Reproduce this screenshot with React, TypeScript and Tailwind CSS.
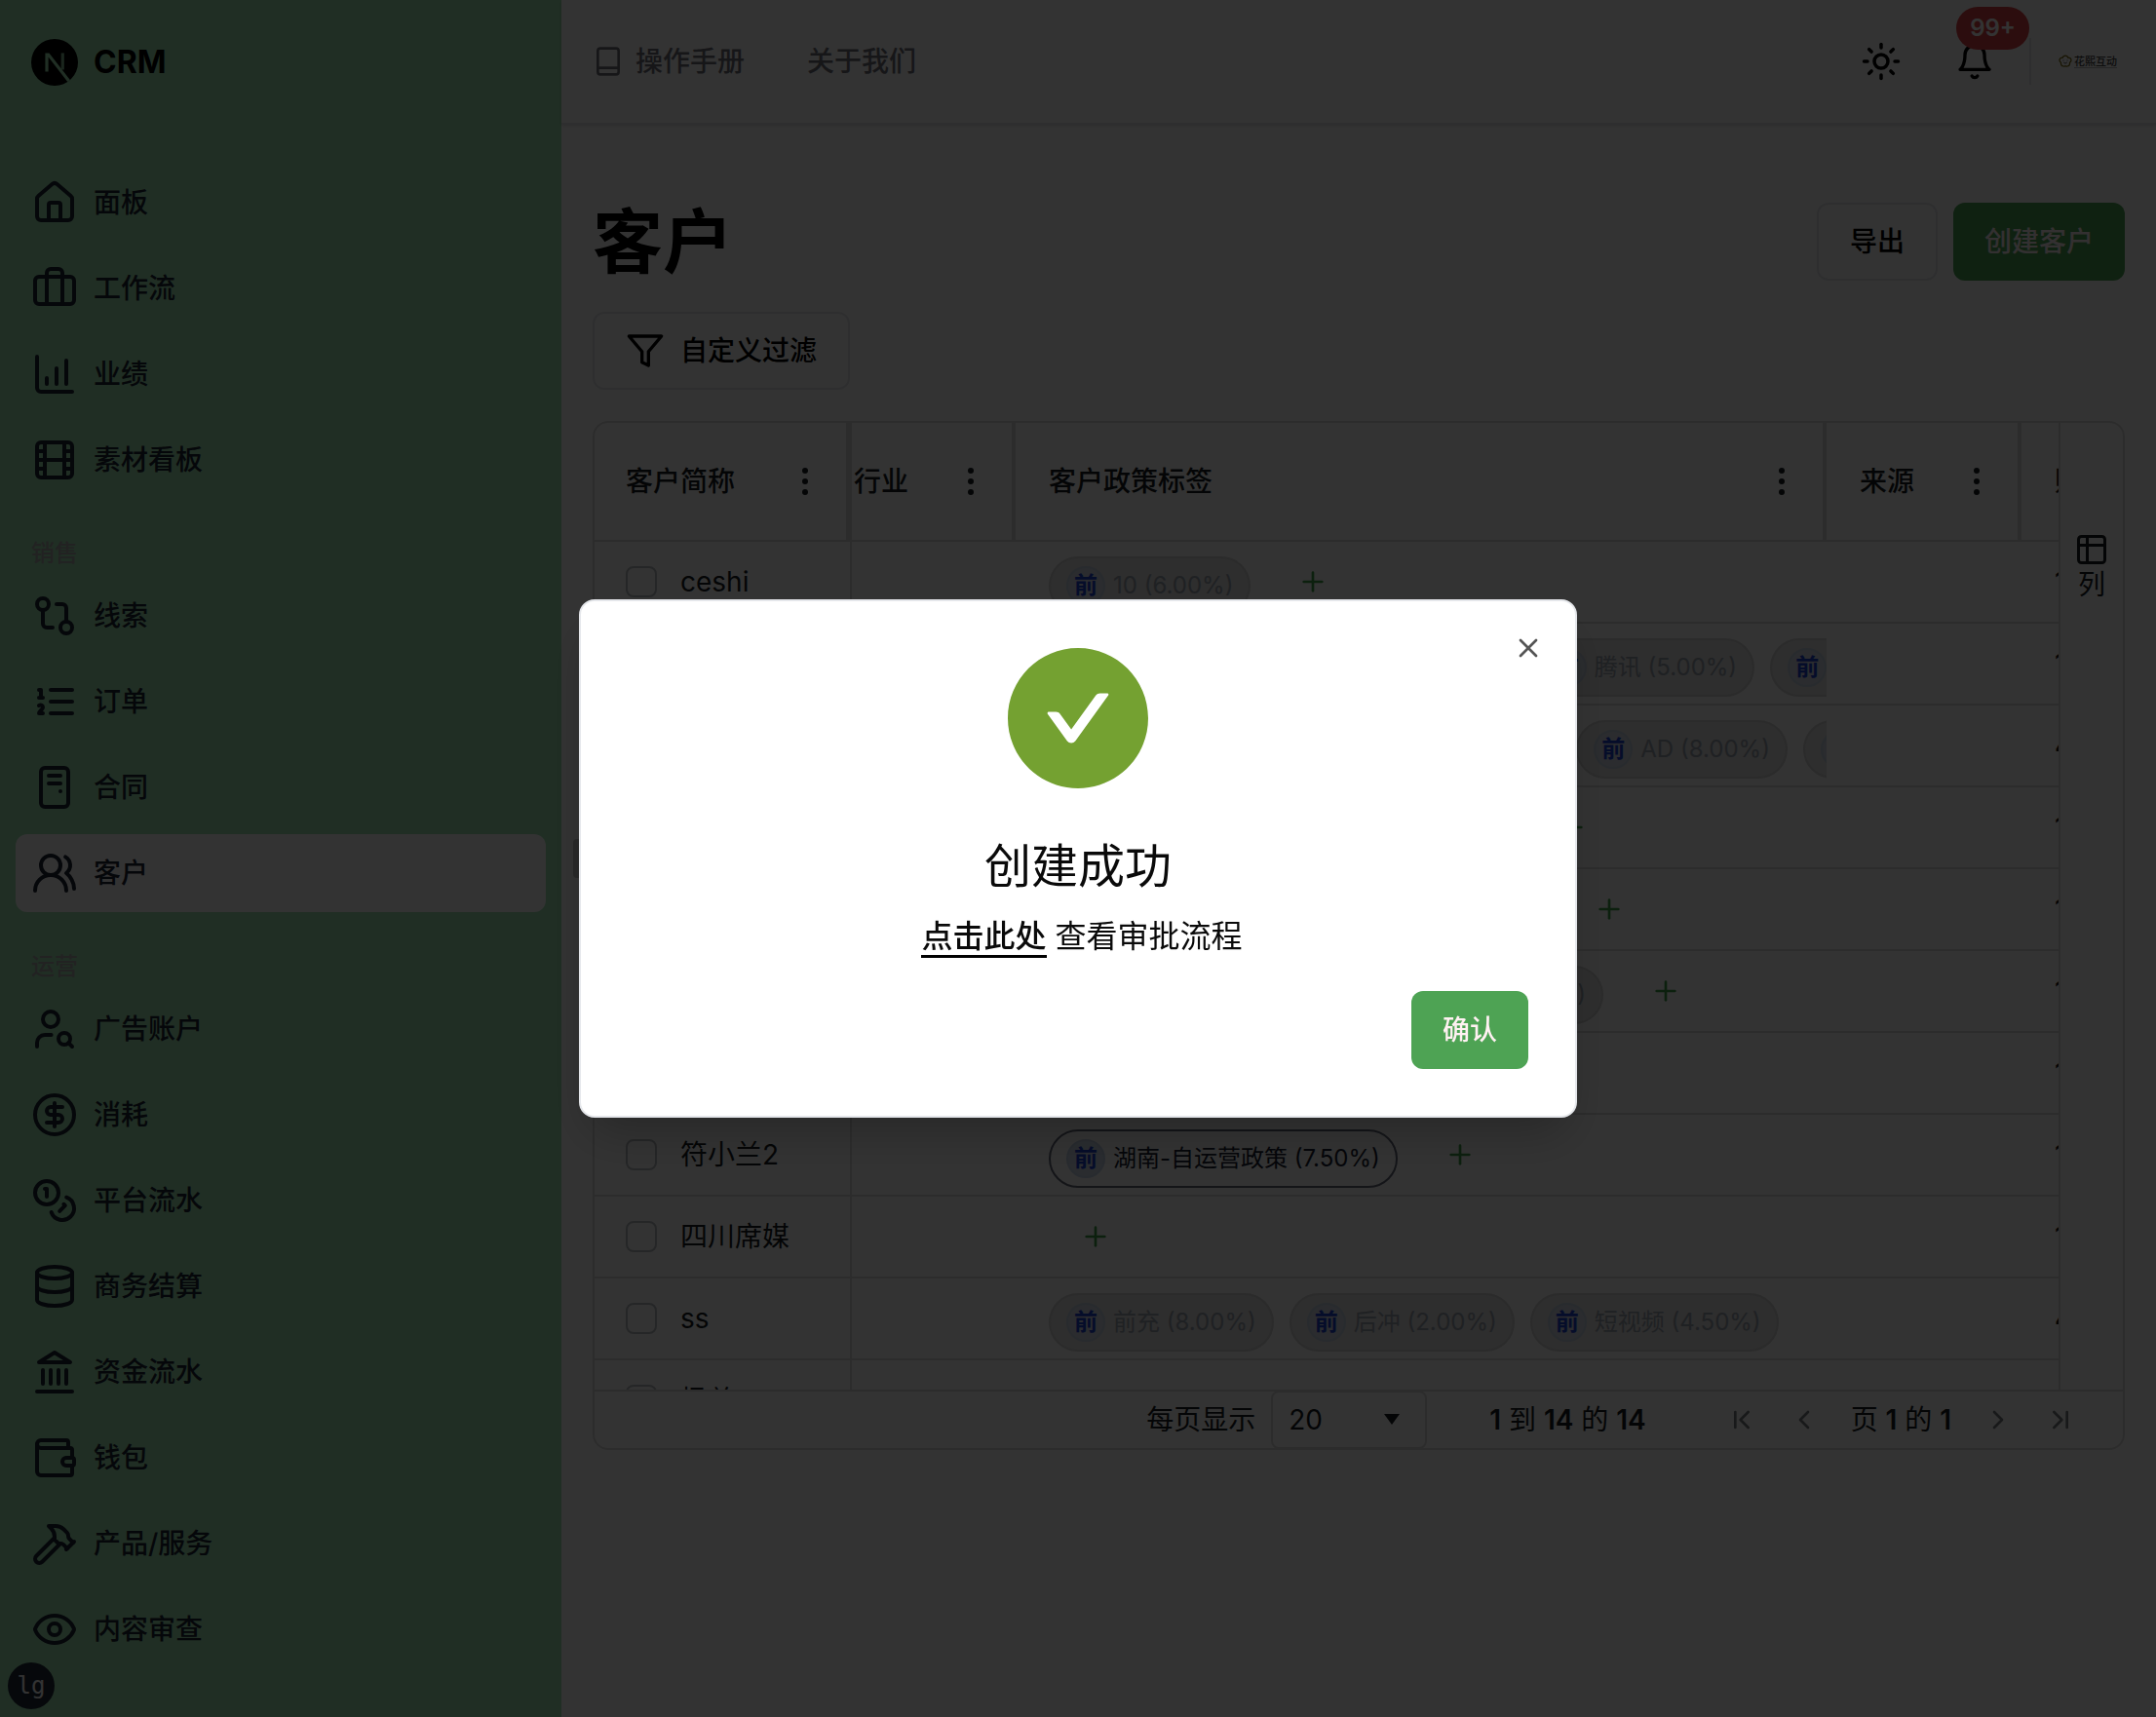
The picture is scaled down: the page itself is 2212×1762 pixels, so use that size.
import type { ComponentType, ReactNode, SVGProps } from 'react'
import {
  Briefcase,
  ChartColumnIncreasing,
  ChevronFirst,
  ChevronLast,
  ChevronLeft,
  ChevronRight,
  CircleDollarSign,
  Database,
  Eye,
  Film,
  GitCompare,
  Hammer,
  House,
  PcCase,
  Plus,
  Sun,
  UserSearch,
  UsersRound,
  Wallet,
  X,
} from 'lucide-react'
import { clsx } from 'clsx'

type IconType = ComponentType<{ className?: string }>

function StrokeIcon({ children, ...props }: SVGProps<SVGSVGElement> & { children: ReactNode }) {
  return (
    <svg
      viewBox="0 0 24 24"
      fill="none"
      stroke="currentColor"
      strokeWidth="2"
      strokeLinecap="round"
      strokeLinejoin="round"
      aria-hidden="true"
      {...props}
    >
      {children}
    </svg>
  )
}

const OrderIcon: IconType = ({ className }) => (
  <StrokeIcon className={className}>
    <path d="M10 6h11M10 12h11M10 18h11M4 6h1v4M4 10h2M6 18H4c0-1 2-2 2-3s-1-1.5-2-1" />
  </StrokeIcon>
)

const CoinsIcon: IconType = ({ className }) => (
  <StrokeIcon className={className}>
    <circle cx="8" cy="8" r="6" />
    <path d="M18.09 10.37A6 6 0 1 1 10.34 18M7 6h1v4M16.71 13.88l.7.71-2.82 2.82" />
  </StrokeIcon>
)

const BankIcon: IconType = ({ className }) => (
  <StrokeIcon className={className}>
    <path d="M3 22h18M6 18v-7M10 18v-7M14 18v-7M18 18v-7M12 2l8 5H4z" />
  </StrokeIcon>
)

const BookIcon: IconType = ({ className }) => (
  <StrokeIcon className={className}>
    <rect x="4" y="2" width="16" height="20" rx="2" />
    <path d="M4 17h16" />
  </StrokeIcon>
)

const BellIcon: IconType = ({ className }) => (
  <StrokeIcon className={className}>
    <path d="M6 8a6 6 0 0 1 12 0c0 7 3 9 3 9H3s3-2 3-9" />
    <path d="M10.3 21a1.94 1.94 0 0 0 3.4 0" />
  </StrokeIcon>
)

const FilterIcon: IconType = ({ className }) => (
  <StrokeIcon className={className}>
    <polygon points="22 3 2 3 10 12.46 10 19 14 21 14 12.46 22 3" />
  </StrokeIcon>
)

const ColumnsIcon: IconType = ({ className }) => (
  <StrokeIcon className={className}>
    <rect x="3" y="3" width="18" height="18" rx="2" />
    <path d="M3 9h18M9 3v18" />
  </StrokeIcon>
)

const DotsIcon: IconType = ({ className }) => (
  <svg viewBox="0 0 32 32" fill="currentColor" className={className} aria-hidden="true">
    <circle cx="16" cy="5" r="3" />
    <circle cx="16" cy="16" r="3" />
    <circle cx="16" cy="27" r="3" />
  </svg>
)

interface NavItem {
  label: string
  icon: IconType
  active?: boolean
}

const navGroups: { title?: string; items: NavItem[] }[] = [
  {
    items: [
      { label: '面板', icon: House },
      { label: '工作流', icon: Briefcase },
      { label: '业绩', icon: ChartColumnIncreasing },
      { label: '素材看板', icon: Film },
    ],
  },
  {
    title: '销售',
    items: [
      { label: '线索', icon: GitCompare },
      { label: '订单', icon: OrderIcon },
      { label: '合同', icon: PcCase },
      { label: '客户', icon: UsersRound, active: true },
    ],
  },
  {
    title: '运营',
    items: [
      { label: '广告账户', icon: UserSearch },
      { label: '消耗', icon: CircleDollarSign },
      { label: '平台流水', icon: CoinsIcon },
      { label: '商务结算', icon: Database },
      { label: '资金流水', icon: BankIcon },
      { label: '钱包', icon: Wallet },
      { label: '产品/服务', icon: Hammer },
      { label: '内容审查', icon: Eye },
    ],
  },
]

interface Policy {
  text: string
  enabled?: boolean
}

interface Customer {
  name: string
  policies: Policy[]
  accounts: number
}

const customers: Customer[] = [
  { name: 'ceshi', policies: [{ text: '10 (6.00%)' }], accounts: 1 },
  {
    name: '测试客户',
    policies: [{ text: '前充 (8.00%)' }, { text: '后冲 (2.00%)' }, { text: '腾讯 (5.00%)' }, { text: '快手 (3.00%)' }],
    accounts: 1,
  },
  {
    name: '星河传媒',
    policies: [{ text: '短视频 (4.50%)' }, { text: '信息流 (6.00%)' }, { text: 'AD (8.00%)' }, { text: '千川 (2.00%)' }],
    accounts: 4,
  },
  { name: '云帆科技', policies: [{ text: '前充 (1.00%)' }, { text: '后冲 (2.00%)' }], accounts: 1 },
  { name: '蓝海', policies: [{ text: '巨量引擎 (6.00%)' }, { text: 'AD (8.00%)' }], accounts: 1 },
  { name: '长沙互动', policies: [{ text: '巨量引擎 (7.50%)' }, { text: '磁力金牛 (5.00%)' }], accounts: 1 },
  { name: '符小兰', policies: [{ text: '前充 (8.00%)' }], accounts: 1 },
  { name: '符小兰2', policies: [{ text: '湖南-自运营政策 (7.50%)', enabled: true }], accounts: 1 },
  { name: '四川席媒', policies: [], accounts: 1 },
  {
    name: 'ss',
    policies: [{ text: '前充 (8.00%)' }, { text: '后冲 (2.00%)' }, { text: '短视频 (4.50%)' }],
    accounts: 4,
  },
  { name: '杨总', policies: [], accounts: 1 },
]

function NextLogo() {
  return (
    <svg viewBox="0 0 180 180" className="size-12" aria-hidden="true">
      <circle cx="90" cy="90" r="90" fill="#000" />
      <path
        d="M149.508 157.52 69.142 54H54v71.97h12.114V69.384l73.885 95.461a90.304 90.304 0 0 0 9.509-7.325z"
        fill="#a0e6b4"
      />
      <rect x="115" y="54" width="12" height="64" fill="#a0e6b4" opacity="0.8" />
    </svg>
  )
}

function Sidebar() {
  return (
    <aside className="w-144 shrink-0 bg-[#a0e6b4] px-4 pt-10">
      <a href="#home" className="flex items-center gap-4 px-4 text-black">
        <NextLogo />
        <span className="text-[32px] leading-12 font-bold">CRM</span>
      </a>
      <nav className="mt-20 flex flex-col gap-10">
        {navGroups.map((group, index) => (
          <div key={index}>
            {group.title && (
              <h2 className="mb-2 px-4 text-2xl font-medium text-[#a8a8a8]">{group.title}</h2>
            )}
            <ul className="flex flex-col gap-2">
              {group.items.map(({ label, icon: Icon, active }) => (
                <li key={label}>
                  <a
                    href={`#${label}`}
                    className={clsx(
                      'flex h-20 items-center gap-4 rounded-xl px-4 text-[28px] font-medium text-[#1c2333]',
                      active && 'bg-white'
                    )}
                  >
                    <Icon className="size-12" />
                    {label}
                  </a>
                </li>
              ))}
            </ul>
          </div>
        ))}
      </nav>
    </aside>
  )
}

function BrandMark() {
  return (
    <a href="#profile" className="ml-7 mr-2 flex items-center gap-0.5">
      <svg viewBox="0 0 28 28" className="size-3.5" fill="none" aria-hidden="true">
        <path
          d="M14 2c3 0 5 2 5.5 4.5C23 6 26 8.5 26 11.5c0 2.5-1.5 4-3 5 .5 4-1.5 7-5 7.5-2 .5-3-.5-4-.5s-2 1-4 .5c-3.5-.5-5.5-3.5-5-7.5-1.5-1-3-2.5-3-5C2 8.5 5 6 8.5 6.5 9 4 11 2 14 2z"
          stroke="#7a6a10"
          strokeWidth="2.5"
        />
        <path d="M9 12h2M17 12h2M10.5 16c1.5 2.5 5.5 2.5 7 0" stroke="#555" strokeWidth="2" />
      </svg>
      <span className="border-b border-[#bbb] text-[11px] leading-3 font-medium text-[#444]">花熙互动</span>
    </a>
  )
}

function Header() {
  return (
    <header className="flex h-32 items-center border-b-2 border-gray-200 px-8 shadow-sm">
      <nav className="flex items-center gap-16 text-[28px] font-medium text-[#71717a]">
        <a href="#manual" className="flex items-center gap-3">
          <BookIcon className="size-8" />
          操作手册
        </a>
        <a href="#about">关于我们</a>
      </nav>
      <div className="ml-auto flex items-center">
        <button aria-label="切换主题" className="mr-4 flex size-20 items-center justify-center text-black">
          <Sun className="size-[42px]" />
        </button>
        <button aria-label="通知" className="relative mr-4 flex size-20 items-center justify-center text-black">
          <BellIcon className="size-10" />
          <span className="absolute -top-4 -right-4 flex h-11 items-center rounded-full bg-[#dc4446] px-3.5 text-2xl font-semibold text-white">
            99+
          </span>
        </button>
        <span className="h-12 w-0.5 bg-gray-200" />
        <BrandMark />
      </div>
    </header>
  )
}

function PolicyTag({ text, enabled }: Policy) {
  return (
    <span
      className={clsx(
        'mr-4 flex h-15 shrink-0 items-center gap-2 rounded-full border-2 px-4 text-2xl',
        enabled ? 'border-[#64687a] text-[#181d2f]' : 'border-[#d4d4d4] bg-[#e3e3e3] text-[#9ca3af]'
      )}
    >
      <span
        className={clsx(
          'flex size-10 items-center justify-center rounded-full border-2 font-bold text-[#1d40d0]',
          enabled ? 'border-[#c6d4ea] bg-[#d0dcec]' : 'border-[#c8d4e6] bg-[#d4dde8]'
        )}
      >
        前
      </span>
      {text}
    </span>
  )
}

function HeadCell({ children, className }: { children: ReactNode; className?: string }) {
  return (
    <th scope="col" className={clsx('h-[122px] border-b-2 border-[#dcdcdc] p-0 text-left font-medium', className)}>
      <div className="flex items-center justify-between whitespace-nowrap">
        {children}
        <button aria-label="列菜单">
          <DotsIcon className="size-8" />
        </button>
      </div>
    </th>
  )
}

function CustomerTable() {
  const cell = 'h-21 overflow-hidden border-b-2 border-[#dcdcdc] p-0 whitespace-nowrap'

  return (
    <table className="w-full table-fixed border-separate border-spacing-0">
      <colgroup>
        <col className="w-66" />
        <col className="w-42" />
        <col className="w-208" />
        <col className="w-50" />
        <col />
      </colgroup>
      <thead>
        <tr>
          <HeadCell className="border-r-6 pr-[26px] pl-8">客户简称</HeadCell>
          <HeadCell className="border-r-4 pr-[26px] pl-0.5">行业</HeadCell>
          <HeadCell className="border-r-4 pr-[26px] pl-[34px]">客户政策标签</HeadCell>
          <HeadCell className="border-r-4 pr-[26px] pl-[34px]">来源</HeadCell>
          <th
            scope="col"
            className="overflow-hidden border-b-2 border-[#dcdcdc] p-0 pl-[34px] text-left font-medium whitespace-nowrap"
          >
            账户数
          </th>
        </tr>
      </thead>
      <tbody>
        {customers.map((customer) => (
          <tr key={customer.name}>
            <td className={clsx(cell, 'border-r-2')}>
              <label className="flex items-center gap-6 pl-8">
                <input
                  type="checkbox"
                  className="size-8 shrink-0 appearance-none rounded-lg border-2 border-[#b8bcc0]"
                />
                {customer.name}
              </label>
            </td>
            <td className={cell} />
            <td className={cell}>
              <div className="flex items-center pl-[34px]">
                <div className="flex pt-2">
                  {customer.policies.map((policy) => (
                    <PolicyTag key={policy.text} {...policy} />
                  ))}
                </div>
                <button aria-label="添加政策" className="flex w-24 shrink-0 justify-center text-[#3f9e48]">
                  <Plus className="size-8" />
                </button>
              </div>
            </td>
            <td className={cell} />
            <td className={clsx(cell, 'pl-[34px] font-medium')}>{customer.accounts}</td>
          </tr>
        ))}
      </tbody>
    </table>
  )
}

function Pagination() {
  return (
    <footer className="flex h-15 items-center justify-end border-t-2 border-[#dcdcdc] pr-12">
      <label htmlFor="page-size" className="mr-4">
        每页显示
      </label>
      <div className="relative mr-16">
        <select
          id="page-size"
          defaultValue="20"
          className="h-15 w-40 appearance-none rounded-lg border-2 border-[#dcdcdc] bg-white pl-4"
        >
          <option>20</option>
          <option>50</option>
          <option>100</option>
        </select>
        <svg
          viewBox="0 0 16 11"
          fill="currentColor"
          className="pointer-events-none absolute top-6 right-7 h-[11px] w-4"
          aria-hidden="true"
        >
          <path d="M0 0h16L8 11z" />
        </svg>
      </div>
      <p className="mr-[82px]">
        <b className="font-semibold">1</b> 到 <b className="font-semibold">14</b> 的 <b className="font-semibold">14</b>
      </p>
      <div className="flex items-center gap-8">
        <button aria-label="第一页" disabled className="text-[#7b7e80]">
          <ChevronFirst className="size-8" />
        </button>
        <button aria-label="上一页" disabled className="text-[#7b7e80]">
          <ChevronLeft className="size-8" />
        </button>
        <p>
          页 <b className="font-semibold">1</b> 的 <b className="font-semibold">1</b>
        </p>
        <button aria-label="下一页" disabled className="text-[#7b7e80]">
          <ChevronRight className="size-8" />
        </button>
        <button aria-label="最后一页" disabled className="text-[#7b7e80]">
          <ChevronLast className="size-8" />
        </button>
      </div>
    </footer>
  )
}

function SuccessDialog() {
  return (
    <div className="fixed inset-0 z-50 flex items-center justify-center bg-black/80">
      <div
        role="dialog"
        aria-modal="true"
        aria-labelledby="dialog-title"
        className="relative flex w-full max-w-5xl flex-col items-center rounded-2xl border-2 border-gray-200 bg-white p-12 shadow-2xl"
      >
        <button aria-label="关闭" className="absolute top-8 right-8 text-[#555]">
          <X className="size-8" />
        </button>
        <svg viewBox="64 64 896 896" className="size-36" aria-hidden="true">
          <path
            fill="#74a131"
            d="M512 64C264.6 64 64 264.6 64 512s200.6 448 448 448 448-200.6 448-448S759.4 64 512 64zm193.5 301.7l-210.6 292a31.8 31.8 0 0 1-51.7 0L318.5 484.9c-3.8-5.3 0-12.7 6.5-12.7h46.9c10.2 0 19.9 4.9 25.9 13.3l71.2 98.8 157.2-218c6-8.3 15.6-13.3 25.9-13.3H699c6.5 0 10.3 7.4 6.5 12.7z"
          />
        </svg>
        <h2 id="dialog-title" className="mt-12 text-5xl leading-16">
          创建成功
        </h2>
        <p className="mt-4 pl-2 text-[32px] leading-12">
          <a href="#approval" className="border-b-3 border-black font-medium">
            点击此处
          </a>{' '}
          查看审批流程
        </p>
        <button className="mt-8 h-20 self-end rounded-xl bg-[#4ea354] px-8 font-medium text-[#fff1f2]">确认</button>
      </div>
    </div>
  )
}

export default function App() {
  return (
    <div className="flex min-h-screen bg-white font-['Inter','Noto_Sans_CJK_SC',sans-serif] text-[28px] leading-10 text-[#0a0a0a]">
      <Sidebar />
      <div className="relative min-w-0 flex-1">
        {/* resize handle, centred on the panel edge */}
        <span className="absolute top-1/2 left-3 h-10 w-6 -translate-y-1/2 rounded bg-[#c9c9c9]" />
        <Header />
        <main className="px-8 pt-20">
          <div className="flex items-center justify-between">
            <h1 className="text-7xl font-bold text-black">客户</h1>
            <div className="flex gap-4 font-medium">
              <button className="h-20 rounded-xl border-2 border-gray-200 px-8 text-black">导出</button>
              <button className="h-20 rounded-xl bg-[#4da354] px-8 text-[#fff1f2]">创建客户</button>
            </div>
          </div>
          <button className="mt-8 flex h-20 items-center gap-4 rounded-xl border-2 border-gray-200 px-8 font-medium text-black">
            <FilterIcon className="size-10" />
            自定义过滤
          </button>
          <section className="mt-8 overflow-hidden rounded-2xl border-2 border-[#dcdcdc] text-[#181d1f]">
            <div className="flex h-[992px]">
              <div className="min-w-0 flex-1 overflow-hidden">
                <CustomerTable />
              </div>
              <div className="w-[66px] shrink-0 border-l-2 border-[#dcdcdc] pt-28">
                <button className="flex w-full flex-col items-center leading-9">
                  <ColumnsIcon className="size-9" />
                  列
                </button>
              </div>
            </div>
            <Pagination />
          </section>
        </main>
      </div>
      <span className="fixed bottom-2 left-2 z-40 flex size-12 items-center justify-center rounded-full bg-[#1f2937] font-['DejaVu_Sans_Mono',monospace] text-2xl text-white">
        lg
      </span>
      <SuccessDialog />
    </div>
  )
}
